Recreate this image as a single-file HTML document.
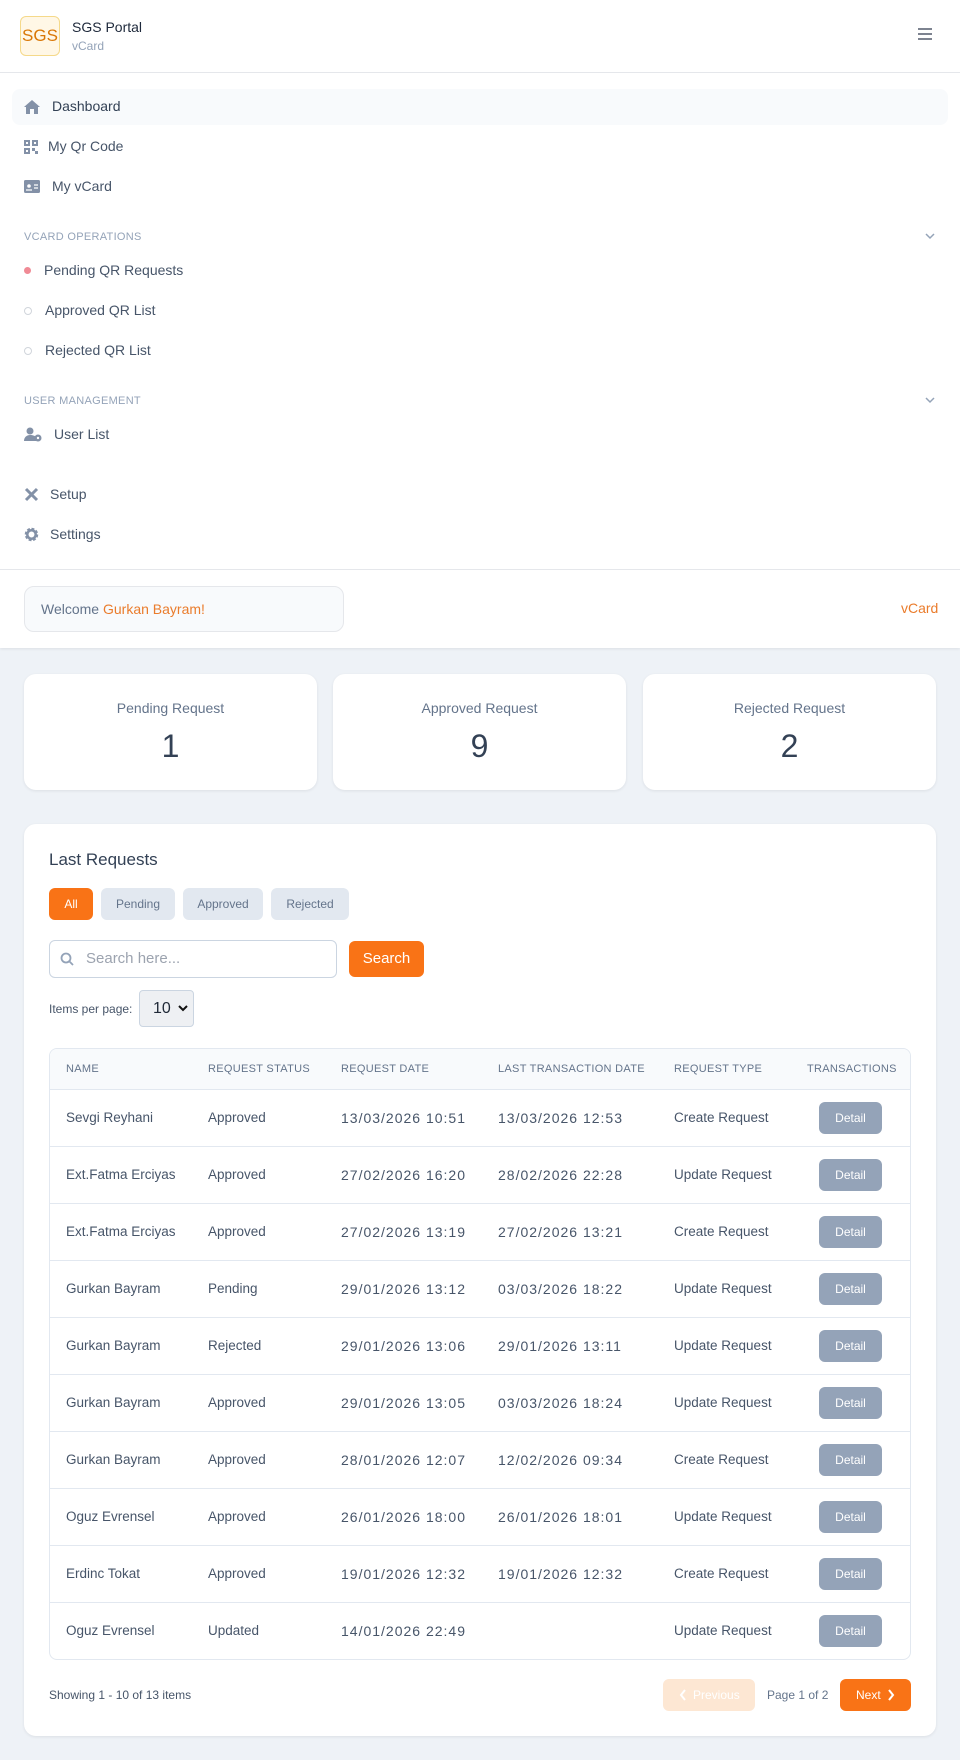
<!DOCTYPE html>
<html><head><meta charset="utf-8"><style>
*{box-sizing:border-box;margin:0;padding:0}
body{width:960px;height:1760px;background:#eef2f7;font-family:"Liberation Sans",sans-serif;color:#475569;position:relative;overflow:hidden}
.a{position:absolute}
.top{left:0;top:0;width:960px;height:648px;background:#fff;box-shadow:0 1px 3px rgba(0,0,0,.08)}
.nav{font-size:14px;color:#475569;white-space:nowrap}
.sec{font-size:11px;color:#94a3b8;letter-spacing:.3px}
.ic{fill:#8391a7}
.card{background:#fff;border-radius:12px;box-shadow:0 1px 3px rgba(0,0,0,.08)}
.lbl{font-size:14px;color:#64748b;text-align:center;width:100%}
.num{font-size:32px;color:#334155;text-align:center;width:100%}
.tab{height:32px;border-radius:6px;background:#e2e8f0;color:#64748b;font-size:12px;line-height:32px;text-align:center}
table{border-collapse:collapse;width:860px;font-size:13.5px;color:#475569;table-layout:fixed}
th{height:40px;background:#f8fafc;font-weight:normal;font-size:11px;color:#64748b;text-align:left;letter-spacing:.3px;border-bottom:1px solid #e2e8f0;white-space:nowrap}
td{height:57px;border-bottom:1px solid #e2e8f0;white-space:nowrap}
td.d{letter-spacing:1px;font-size:14px}
tr:last-child td{border-bottom:none}
.det{display:inline-block;width:63px;height:32px;border-radius:6px;background:#94a3b8;color:#fff;font-size:12px;line-height:32px;text-align:center;letter-spacing:0}
</style></head><body>
<div class="a top"></div>
<div class="a" style="left:20px;top:16px;width:40px;height:40px;border:1px solid #f5d98a;border-radius:6px;background:#fff7e6;color:#d97706;font-size:17px;line-height:38px;text-align:center">SGS</div>
<div class="a" style="left:72px;top:19px;font-size:14px;color:#1e293b">SGS Portal</div>
<div class="a" style="left:72px;top:39px;font-size:12px;color:#94a3b8">vCard</div>
<svg class="a" style="left:917px;top:27px" width="16" height="14"><path d="M1 2h14M1 7h14M1 12h14" stroke="#6b7280" stroke-width="1.8"/></svg>
<div class="a" style="left:0;top:72px;width:960px;height:1px;background:#e5e7eb"></div>
<div class="a" style="left:12px;top:89px;width:936px;height:36px;background:#f8fafc;border-radius:8px"></div>
<svg class="a" style="left:24px;top:99px" width="16" height="15"><path class="ic" d="M8 1L0 8h2v7h4v-5h4v5h4V8h2z"/></svg>
<div class="a nav" style="left:52px;top:98px;color:#334155">Dashboard</div>
<svg class="a" style="left:24px;top:140px" width="14" height="14"><path class="ic" d="M0 0h6v6H0zM8 0h6v6H8zM0 8h6v6H0zM8 8h3v3H8zM11 11h3v3h-3z"/><path d="M2 2h2v2H2zM10 2h2v2h-2zM2 10h2v2H2z" fill="#fff"/></svg>
<div class="a nav" style="left:48px;top:138px">My Qr Code</div>
<svg class="a" style="left:24px;top:180px" width="16" height="13"><rect class="ic" width="16" height="13" rx="1.5"/><circle cx="5" cy="6" r="1.8" fill="#fff"/><path d="M2 10h6M10 5h4M10 8h4" stroke="#fff" stroke-width="1.3"/></svg>
<div class="a nav" style="left:52px;top:178px">My vCard</div>
<div class="a sec" style="left:24px;top:231px">VCARD OPERATIONS</div>
<svg class="a" style="left:925px;top:233px" width="10" height="7"><path d="M1 1l4 4 4-4" stroke="#94a3b8" stroke-width="1.5" fill="none"/></svg>
<div class="a" style="left:24px;top:267px;width:7px;height:7px;border-radius:50%;background:#f08a95"></div>
<div class="a nav" style="left:44px;top:262px">Pending QR Requests</div>
<div class="a" style="left:24px;top:307px;width:8px;height:8px;border-radius:50%;border:1px solid #d1d5db"></div>
<div class="a nav" style="left:45px;top:302px">Approved QR List</div>
<div class="a" style="left:24px;top:347px;width:8px;height:8px;border-radius:50%;border:1px solid #d1d5db"></div>
<div class="a nav" style="left:45px;top:342px">Rejected QR List</div>
<div class="a sec" style="left:24px;top:395px">USER MANAGEMENT</div>
<svg class="a" style="left:925px;top:397px" width="10" height="7"><path d="M1 1l4 4 4-4" stroke="#94a3b8" stroke-width="1.5" fill="none"/></svg>
<svg class="a" style="left:24px;top:427px" width="18" height="15"><circle class="ic" cx="6" cy="4" r="3.5"/><path class="ic" d="M0 14c0-4 3-6 6-6s5 1 6 2v4z"/><circle class="ic" cx="14" cy="11" r="3.5"/><circle cx="14" cy="11" r="1.2" fill="#fff"/></svg>
<div class="a nav" style="left:54px;top:426px">User List</div>
<svg class="a" style="left:24px;top:487px" width="15" height="15"><path d="M2 2l11 11M13 2L2 13" stroke="#8391a7" stroke-width="3"/></svg>
<div class="a nav" style="left:50px;top:486px">Setup</div>
<svg class="a" style="left:24px;top:527px" width="15" height="15"><circle cx="7.5" cy="7.5" r="5" fill="none" stroke="#8391a7" stroke-width="3.5" stroke-dasharray="2.5 1.4"/><circle cx="7.5" cy="7.5" r="4.2" fill="none" stroke="#8391a7" stroke-width="2.5"/></svg>
<div class="a nav" style="left:50px;top:526px">Settings</div>
<div class="a" style="left:0;top:569px;width:960px;height:1px;background:#e5e7eb"></div>
<div class="a" style="left:24px;top:586px;width:320px;height:46px;background:#f8fafc;border:1px solid #e5e7eb;border-radius:10px;font-size:14px;line-height:44px;padding-left:16px;color:#64748b">Welcome <span style="color:#ea7c2c">Gurkan Bayram!</span></div>
<div class="a" style="left:901px;top:600px;font-size:14px;color:#ea7c2c">vCard</div>

<div class="a card" style="left:24px;top:674px;width:293px;height:116px"><div class="a lbl" style="top:26px">Pending Request</div><div class="a num" style="top:54px">1</div></div>
<div class="a card" style="left:333px;top:674px;width:293px;height:116px"><div class="a lbl" style="top:26px">Approved Request</div><div class="a num" style="top:54px">9</div></div>
<div class="a card" style="left:643px;top:674px;width:293px;height:116px"><div class="a lbl" style="top:26px">Rejected Request</div><div class="a num" style="top:54px">2</div></div>

<div class="a card" style="left:24px;top:824px;width:912px;height:912px"></div>
<div class="a" style="left:49px;top:850px;font-size:17px;color:#334155">Last Requests</div>
<div class="a tab" style="left:49px;top:888px;width:44px;background:#f97316;color:#fff">All</div>
<div class="a tab" style="left:101px;top:888px;width:74px">Pending</div>
<div class="a tab" style="left:183px;top:888px;width:80px">Approved</div>
<div class="a tab" style="left:271px;top:888px;width:78px">Rejected</div>
<div class="a" style="left:49px;top:940px;width:288px;height:38px;border:1px solid #cbd5e1;border-radius:6px"></div>
<svg class="a" style="left:60px;top:952px" width="14" height="14"><circle cx="6" cy="6" r="4.5" stroke="#94a3b8" stroke-width="1.8" fill="none"/><path d="M9.5 9.5l3.5 3.5" stroke="#94a3b8" stroke-width="1.8"/></svg>
<div class="a" style="left:86px;top:950px;font-size:15px;color:#9ca3af">Search here...</div>
<div class="a" style="left:349px;top:941px;width:75px;height:36px;border-radius:6px;background:#f97316;color:#fff;font-size:15px;line-height:36px;text-align:center">Search</div>
<div class="a" style="left:49px;top:1002px;font-size:12px;color:#475569">Items per page:</div>
<div class="a" style="left:139px;top:990px;width:55px;height:37px;border:1px solid #cbd5e1;border-radius:4px;background:#eef0f3;font-size:16px;line-height:35px;padding-left:13px;color:#1f2937">10</div>
<svg class="a" style="left:178px;top:1005px" width="10" height="7"><path d="M1 1l4 4 4-4" stroke="#111" stroke-width="2" fill="none"/></svg>

<div class="a" style="left:49px;top:1048px;width:862px;height:612px;border:1px solid #e2e8f0;border-radius:8px;overflow:hidden">
<table>
<colgroup><col style="width:158px"><col style="width:133px"><col style="width:157px"><col style="width:176px"><col style="width:133px"><col style="width:103px"></colgroup>
<tr><th style="padding-left:16px">NAME</th><th>REQUEST STATUS</th><th>REQUEST DATE</th><th>LAST TRANSACTION DATE</th><th>REQUEST TYPE</th><th>TRANSACTIONS</th></tr>
<tr><td style="padding-left:16px">Sevgi Reyhani</td><td>Approved</td><td class="d">13/03/2026 10:51</td><td class="d">13/03/2026 12:53</td><td>Create Request</td><td style="padding-left:12px"><span class="det">Detail</span></td></tr>
<tr><td style="padding-left:16px">Ext.Fatma Erciyas</td><td>Approved</td><td class="d">27/02/2026 16:20</td><td class="d">28/02/2026 22:28</td><td>Update Request</td><td style="padding-left:12px"><span class="det">Detail</span></td></tr>
<tr><td style="padding-left:16px">Ext.Fatma Erciyas</td><td>Approved</td><td class="d">27/02/2026 13:19</td><td class="d">27/02/2026 13:21</td><td>Create Request</td><td style="padding-left:12px"><span class="det">Detail</span></td></tr>
<tr><td style="padding-left:16px">Gurkan Bayram</td><td>Pending</td><td class="d">29/01/2026 13:12</td><td class="d">03/03/2026 18:22</td><td>Update Request</td><td style="padding-left:12px"><span class="det">Detail</span></td></tr>
<tr><td style="padding-left:16px">Gurkan Bayram</td><td>Rejected</td><td class="d">29/01/2026 13:06</td><td class="d">29/01/2026 13:11</td><td>Update Request</td><td style="padding-left:12px"><span class="det">Detail</span></td></tr>
<tr><td style="padding-left:16px">Gurkan Bayram</td><td>Approved</td><td class="d">29/01/2026 13:05</td><td class="d">03/03/2026 18:24</td><td>Update Request</td><td style="padding-left:12px"><span class="det">Detail</span></td></tr>
<tr><td style="padding-left:16px">Gurkan Bayram</td><td>Approved</td><td class="d">28/01/2026 12:07</td><td class="d">12/02/2026 09:34</td><td>Create Request</td><td style="padding-left:12px"><span class="det">Detail</span></td></tr>
<tr><td style="padding-left:16px">Oguz Evrensel</td><td>Approved</td><td class="d">26/01/2026 18:00</td><td class="d">26/01/2026 18:01</td><td>Update Request</td><td style="padding-left:12px"><span class="det">Detail</span></td></tr>
<tr><td style="padding-left:16px">Erdinc Tokat</td><td>Approved</td><td class="d">19/01/2026 12:32</td><td class="d">19/01/2026 12:32</td><td>Create Request</td><td style="padding-left:12px"><span class="det">Detail</span></td></tr>
<tr><td style="padding-left:16px">Oguz Evrensel</td><td>Updated</td><td class="d">14/01/2026 22:49</td><td></td><td>Update Request</td><td style="padding-left:12px"><span class="det">Detail</span></td></tr>
</table></div>

<div class="a" style="left:49px;top:1688px;font-size:12px;color:#475569">Showing 1 - 10 of 13 items</div>
<div class="a" style="left:663px;top:1679px;width:92px;height:32px;border-radius:6px;background:#fde7d3;color:#fff;font-size:12px;line-height:32px;padding-left:30px">Previous</div>
<svg class="a" style="left:679px;top:1689px" width="8" height="12"><path d="M6 1L2 6l4 5" stroke="#fff" stroke-width="2" fill="none"/></svg>
<div class="a" style="left:767px;top:1688px;font-size:12px;color:#64748b">Page 1 of 2</div>
<div class="a" style="left:840px;top:1679px;width:71px;height:32px;border-radius:6px;background:#f97316;color:#fff;font-size:12px;line-height:32px;padding-left:16px">Next</div>
<svg class="a" style="left:887px;top:1689px" width="8" height="12"><path d="M2 1l4 5-4 5" stroke="#fff" stroke-width="2" fill="none"/></svg>
</body></html>
